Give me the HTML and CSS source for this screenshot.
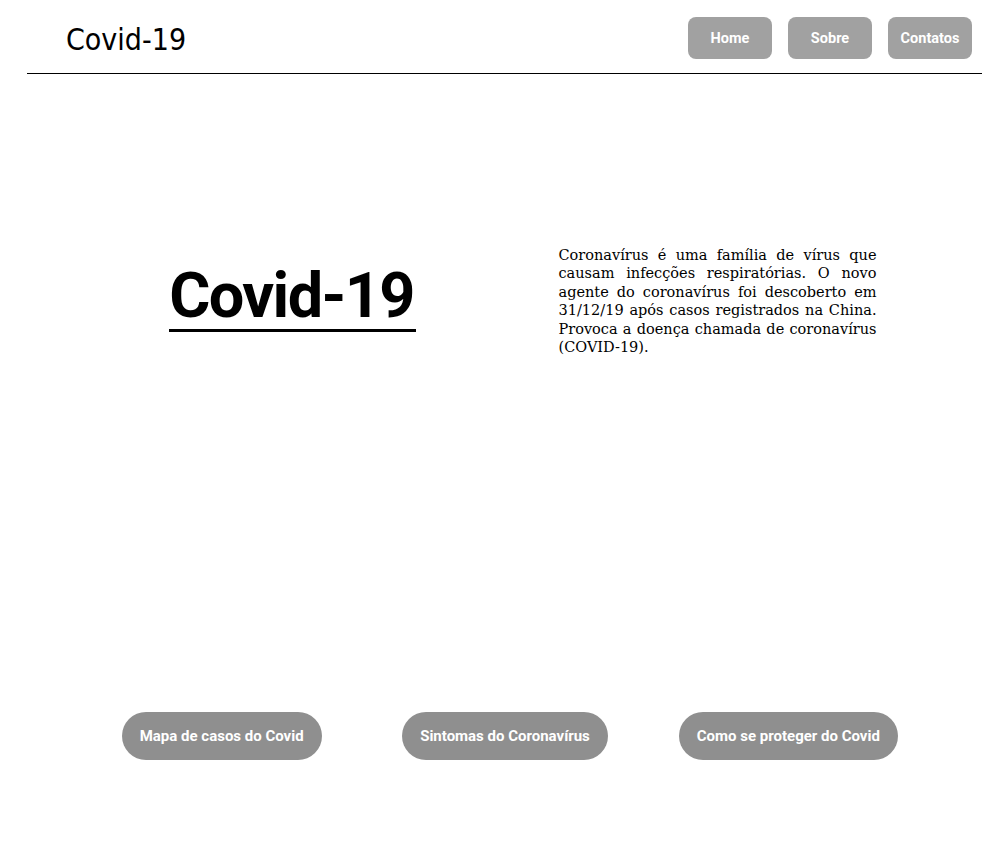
FILE: index.html
```html
<!DOCTYPE html>
<html lang="pt-BR">
<head>
<meta charset="utf-8">
<title>Covid-19</title>
<link rel="stylesheet" href="styles.css">
</head>
<body>
<header class="topbar">
  <div class="brand">Covid-19</div>
  <nav class="nav">
    <a class="nav-btn" href="#">Home</a>
    <a class="nav-btn" href="#">Sobre</a>
    <a class="nav-btn" href="#">Contatos</a>
  </nav>
</header>
<main class="main">
  <section class="intro">
    <div class="intro-title"><h1 class="title">Covid-19</h1></div>
    <div class="intro-text">
      <p class="desc">Coronavírus é uma família de vírus que causam infecções respiratórias. O novo agente do coronavírus foi descoberto em 31/12/19 após casos registrados na China. Provoca a doença chamada de coronavírus (COVID-19).</p>
    </div>
  </section>
  <section class="links">
    <div class="link-cell"><a class="pill" href="#">Mapa de casos do Covid</a></div>
    <div class="link-cell"><a class="pill" href="#">Sintomas do Coronavírus</a></div>
    <div class="link-cell"><a class="pill" href="#">Como se proteger do Covid</a></div>
  </section>
</main>
</body>
</html>
```
FILE: styles.css
```css
* { box-sizing: border-box; }
html, body { margin: 0; padding: 0; background: #fff; }
body { color: #000; }

.topbar {
  display: flex;
  align-items: center;
  justify-content: space-between;
  margin: 0 25px 0 27px;
  height: 74px;
  padding: 3px 10px 0 39px;
  border-bottom: 1px solid #000;
}
.brand {
  font-family: "DejaVu Sans Condensed", "DejaVu Sans", sans-serif;
  font-size: 30px;
  line-height: 1;
  padding-top: 3px;
}
.nav { display: flex; gap: 16px; }
.nav-btn {
  width: 84px;
  height: 42px;
  display: flex;
  align-items: center;
  justify-content: center;
  background: #a1a1a1;
  border-radius: 8px;
  color: #fff;
  text-decoration: none;
  font-family: "Roboto", "Liberation Sans", sans-serif;
  font-weight: 700;
  font-size: 14.5px;
}

.main { width: 850px; margin-left: 80px; }

.intro {
  display: grid;
  grid-template-columns: 1fr 1fr;
  align-items: center;
  height: 454px;
}
.intro-title { display: flex; justify-content: center; padding-bottom: 7px; }
.title {
  margin: 0;
  font-family: "Roboto", "Liberation Sans", sans-serif;
  font-weight: 700;
  font-size: 63px;
  line-height: 1;
  letter-spacing: -1.6px;
  padding: 0 2px 2px 0;
  border-bottom: 3px solid #000;
}
.intro-text { display: flex; justify-content: center; }
.desc {
  margin: 0;
  width: 318px;
  text-align: justify;
  font-family: "DejaVu Serif", serif;
  font-size: 14.5px;
  line-height: 18.5px;
}

.links {
  display: grid;
  grid-template-columns: repeat(3, 1fr);
  margin-top: 184px;
}
.link-cell { display: flex; justify-content: center; }
.pill {
  display: flex;
  align-items: center;
  height: 48px;
  padding: 0 18px;
  border-radius: 24px;
  background: #8f8f8f;
  color: #fff;
  text-decoration: none;
  font-family: "Roboto", "Liberation Sans", sans-serif;
  font-weight: 700;
  font-size: 15px;
}
```
